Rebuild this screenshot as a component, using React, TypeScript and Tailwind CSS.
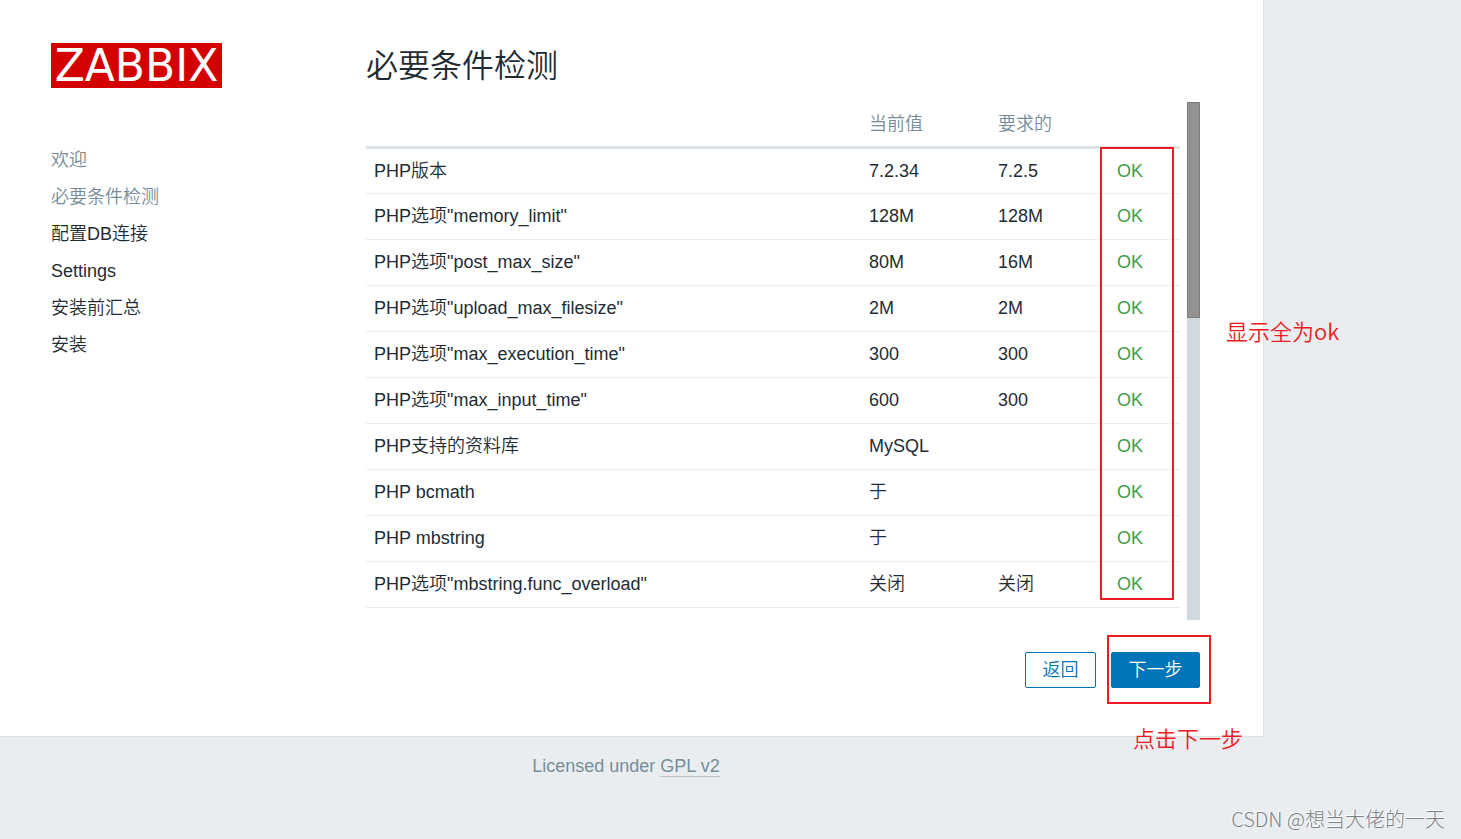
import clsx from "clsx";

interface Requirement {
    name: string;
    current: string;
    required?: string;
}

const steps = [
    { label: "欢迎", done: true },
    { label: "必要条件检测", done: true },
    { label: "配置DB连接", done: false },
    { label: "Settings", done: false },
    { label: "安装前汇总", done: false },
    { label: "安装", done: false },
];

const requirements: Requirement[] = [
    { name: "PHP版本", current: "7.2.34", required: "7.2.5" },
    { name: 'PHP选项"memory_limit"', current: "128M", required: "128M" },
    { name: 'PHP选项"post_max_size"', current: "80M", required: "16M" },
    { name: 'PHP选项"upload_max_filesize"', current: "2M", required: "2M" },
    { name: 'PHP选项"max_execution_time"', current: "300", required: "300" },
    { name: 'PHP选项"max_input_time"', current: "600", required: "300" },
    { name: "PHP支持的资料库", current: "MySQL" },
    { name: "PHP bcmath", current: "于" },
    { name: "PHP mbstring", current: "于" },
    { name: 'PHP选项"mbstring.func_overload"', current: "关闭", required: "关闭" },
];

function Sidebar() {
    return (
        <aside className="w-[315px] shrink-0">
            <div className="flex h-[45px] w-[171px] items-center justify-center bg-[#d40000] font-['DejaVu_Sans',sans-serif] text-[44px] leading-none font-normal text-white">
                ZABBIX
            </div>
            <ul className="mt-[54px]">
                {steps.map((step) => (
                    <li key={step.label} className={clsx("leading-[37px]", step.done && "text-[#768d99]")}>
                        {step.label}
                    </li>
                ))}
            </ul>
        </aside>
    );
}

function RequirementsTable() {
    return (
        <div className="relative grow">
            <table className="w-full table-fixed border-collapse text-left">
                <thead>
                    <tr className="h-[45px] border-b-3 border-[#dce2e5] text-[#768d99]">
                        <th className="px-2" aria-label="检测项" />
                        <th className="w-[129px] px-2 font-[350]">当前值</th>
                        <th className="w-[119px] px-2 font-[350]">要求的</th>
                        <th className="w-[71px] px-2" aria-label="状态" />
                    </tr>
                </thead>
                <tbody>
                    {requirements.map((item) => (
                        <tr key={item.name} className="h-[46px] border-b border-[#ebeef0]">
                            <td className="px-2">{item.name}</td>
                            <td className="px-2">{item.current}</td>
                            <td className="px-2">{item.required}</td>
                            <td className="px-2 text-[#429e47]">OK</td>
                        </tr>
                    ))}
                </tbody>
            </table>

            {/* Highlight round the status column */}
            <div className="pointer-events-none absolute top-[45px] right-[6px] bottom-2 w-[74px] border-2 border-[#ed1c24]" />
        </div>
    );
}

export default function App() {
    return (
        <div className="relative min-h-screen bg-[#e9edf0] font-['Liberation_Sans','Noto_Sans_CJK_SC',sans-serif] text-lg font-[350] text-[#1f2c33]">
            <main className="relative flex w-full max-w-[1264px] border-r border-b border-[#dce2e5] bg-white pt-[43px] pr-[63px] pb-12 pl-[51px]">
                <Sidebar />

                <section className="min-w-0 grow">
                    <h1 className="text-[32px] leading-[46px]">必要条件检测</h1>

                    <div className="mt-[13px] flex gap-[7px]">
                        <div className="flex grow pb-3">
                            <RequirementsTable />
                        </div>
                        <div className="w-[13px] shrink-0 bg-[#d1d9de]">
                            <div className="h-5/12 border border-[#7d7d7d] bg-[#929292]" />
                        </div>
                    </div>

                    <div className="mt-8 flex justify-end gap-[15px]">
                        <button type="button" className="h-9 min-w-[71px] rounded-xs border border-[#0275b8] px-4 text-[#0275b8]">
                            返回
                        </button>
                        <div className="relative">
                            <button type="button" className="h-9 min-w-[89px] rounded-xs border border-[#0275b8] bg-[#0275b8] px-4 text-white">
                                下一步
                            </button>
                            <div className="pointer-events-none absolute -top-[17px] -right-[11px] -bottom-4 -left-1 border-2 border-[#ed1c24]" />
                        </div>
                    </div>
                </section>

                {/* Notes written over the page */}
                <p className="absolute top-[314px] left-[1226px] text-[22px] leading-8 whitespace-nowrap text-[#ed1c24] font-['Noto_Sans_CJK_SC',sans-serif]">
                    显示全为ok
                </p>
                <p className="absolute top-[721px] left-[1133px] text-[22px] leading-8 whitespace-nowrap text-[#ed1c24] font-['Noto_Sans_CJK_SC',sans-serif]">
                    点击下一步
                </p>
            </main>

            <footer className="max-w-[1264px] pt-4 pr-3 text-center leading-[26px] text-[#768d99]">
                Licensed under{" "}
                <a href="#" className="border-b border-[#b9c5cb]">
                    GPL v2
                </a>
            </footer>

            <div className="absolute right-4 bottom-1 font-['Noto_Sans_CJK_SC',sans-serif] text-xl leading-8 font-light text-[#7d8184] [text-shadow:-1px_-1px_0_#ffffff]">
                CSDN @想当大佬的一天
            </div>
        </div>
    );
}
